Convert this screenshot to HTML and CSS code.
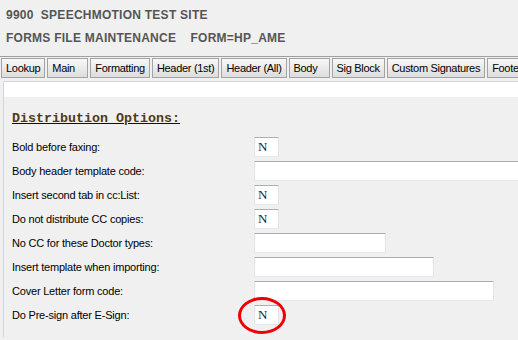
FILE: index.html
```html
<!DOCTYPE html>
<html>
<head>
  <title>Forms File Maintenance</title>
  <link rel="stylesheet" href="styles.css">
</head>
<body>
  <div class="banner">
    <div class="banner-line">9900  SPEECHMOTION TEST SITE</div>
    <div class="banner-line">FORMS FILE MAINTENANCE    FORM=HP_AME</div>
  </div>

  <div class="tabs">
    <span class="tab">Lookup</span>
    <span class="tab">Main</span>
    <span class="tab">Formatting</span>
    <span class="tab">Header (1st)</span>
    <span class="tab">Header (All)</span>
    <span class="tab">Body</span>
    <span class="tab">Sig Block</span>
    <span class="tab">Custom Signatures</span>
    <span class="tab tab-last">Foote</span>
  </div>

  <div class="frame">
    <div class="frame-strip"></div>
    <div class="panel">
      <h2 class="section-title">Distribution Options:</h2>
      <div class="form-grid">
        <label>Bold before faxing:</label>
        <input class="fld fld-flag" type="text" value="N">

        <label>Body header template code:</label>
        <input class="fld fld-wide" type="text">

        <label>Insert second tab in cc:List:</label>
        <input class="fld fld-flag" type="text" value="N">

        <label>Do not distribute CC copies:</label>
        <input class="fld fld-flag" type="text" value="N">

        <label>No CC for these Doctor types:</label>
        <input class="fld fld-short" type="text">

        <label>Insert template when importing:</label>
        <input class="fld fld-mid" type="text">

        <label>Cover Letter form code:</label>
        <input class="fld fld-long" type="text">

        <label>Do Pre-sign after E-Sign:</label>
        <div class="flag-wrap">
          <input class="fld fld-flag" type="text" value="N">
          <span class="mark"></span>
        </div>
      </div>
    </div>
  </div>
</body>
</html>
```

FILE: styles.css
```css
body {
  margin: 0;
  background-color: #f0f0f0;
  font-family: "Liberation Sans", Arial, sans-serif;
  overflow: hidden;
}

.banner {
  padding: 4px 6px 6px;
}
.banner-line {
  height: 23px;
  line-height: 23px;
  font-size: 12px;
  font-weight: bold;
  letter-spacing: 0.25px;
  color: #555555;
  white-space: pre;
}

.tabs {
  display: flex;
  gap: 2px;
  padding: 1px 0 3px 1px;
  border-top: 1px solid #a0a0a0;
  white-space: nowrap;
  overflow: hidden;
}
.tab {
  box-sizing: border-box;
  height: 20px;
  min-width: 41px;
  padding: 0 4px;
  line-height: 18px;
  font-size: 11px;
  letter-spacing: -0.3px;
  color: #000;
  border: 1px solid #a3a3a3;
  background: linear-gradient(#f8f8f8, #dddddd);
  flex-shrink: 0;
}
.tab-last {
  border-right: none;
  padding-right: 0;
}

.frame {
  margin-left: 3px;
  border-top: 1px solid #cdd5de;
  border-left: 1px solid #cdd5de;
  border-top-left-radius: 2px;
  overflow: hidden;
}
.frame-strip {
  height: 15px;
  background-color: #ffffff;
}
.panel {
  padding: 14px 0 12px 8px;
}

.section-title {
  margin: 0 0 10px;
  font-family: "Liberation Mono", "Courier New", monospace;
  font-size: 13.33px;
  font-weight: bold;
  line-height: 16px;
  color: #4f3a14;
  text-decoration: underline;
  text-decoration-color: #111;
}

.form-grid {
  display: grid;
  grid-template-columns: 242px 1fr;
  row-gap: 4px;
  align-items: center;
  justify-items: start;
}
.form-grid label {
  font-size: 11px;
  letter-spacing: -0.2px;
  color: #000;
  white-space: nowrap;
}

.fld {
  box-sizing: border-box;
  height: 20px;
  margin: 0;
  padding: 0 3px;
  background-color: #ffffff;
  border: 1px solid #e2e3ea;
  border-top-color: #abadb3;
  border-bottom-color: #e3e9ef;
  border-radius: 1px;
  font-family: "Liberation Serif", "Times New Roman", serif;
  font-size: 13px;
  color: #1a1a48;
  outline: none;
}
.fld-flag { width: 25px; }
.fld-short { width: 132px; }
.fld-mid { width: 180px; }
.fld-long { width: 240px; }
.fld-wide { width: 300px; }

.flag-wrap {
  position: relative;
  height: 20px;
}
.mark {
  position: absolute;
  left: -16px;
  top: -8px;
  width: 48px;
  height: 37px;
  box-sizing: border-box;
  border: 3px solid #ee0000;
  border-radius: 50%;
}
```
